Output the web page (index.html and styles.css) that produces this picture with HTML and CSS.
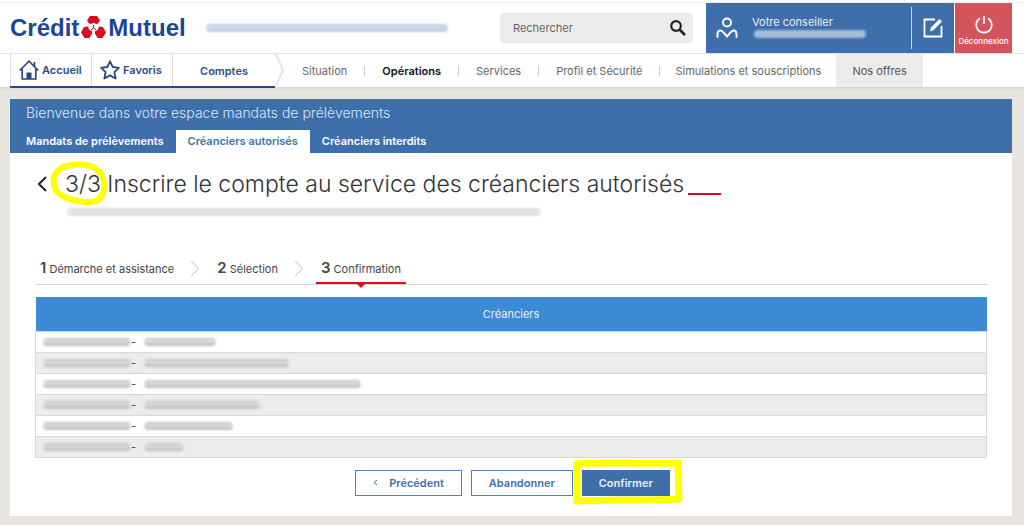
FILE: index.html
```html
<!DOCTYPE html>
<html lang="fr">
<head>
<meta charset="utf-8">
<title>Crédit Mutuel - Créanciers autorisés</title>
<link rel="stylesheet" href="styles.css">
</head>
<body>
<header class="top">
  <a class="logo" href="#">
    <span>Crédit</span>
    <svg class="logo-mark" width="25" height="22" viewBox="0 0 25 22" aria-hidden="true">
      <path fill="#d6101c" d="M9 0h7l3 4.500-2 3-2 .5a4 4 0 0 0-5 0l-2-.5-2-3z"/>
      <path fill="#d6101c" d="M3 11l4-.5 1 3 3 2v2L8.500 22H3.500L0 16.500z"/>
      <path fill="#d6101c" d="M22 11l-4-.5-1 3-3 2v2l2.500 4.500h5l3.500-5.500z"/>
      <path stroke="#d6101c" stroke-width="1" fill="none" d="M12.500 9v3M10 14l2.500-2 2.500 2"/>
    </svg>
    <span>Mutuel</span>
  </a>
  <span class="smear smear-name"></span>
  <form class="search">
    <input type="text" placeholder="Rechercher" aria-label="Rechercher">
    <button type="button" aria-label="Lancer la recherche">
      <svg width="18" height="18" viewBox="0 0 18 18" fill="none" stroke="#222"><circle cx="7" cy="7" r="4.800" stroke-width="2.200"/><path d="M10.500 10.500l5.500 5.500" stroke-width="2.600"/></svg>
    </button>
  </form>
  <div class="adviser">
    <svg class="person" width="22" height="22" viewBox="0 0 22 22" fill="none" stroke="#fff" stroke-width="1.900" stroke-linecap="round"><circle cx="11" cy="5.500" r="4"/><path d="M1.500 20v-3c0-3.500 3.500-4.500 5.500-2l4 4.500 4-4.500c2-2.500 5.500-1.500 5.500 2v3"/></svg>
    <div class="adviser-text">
      <span>Votre conseiller</span>
      <span class="smear smear-adviser"></span>
    </div>
    <a class="write" href="#" aria-label="Écrire">
      <svg width="21" height="21" viewBox="0 0 21 21" fill="none" stroke="#fff" stroke-width="1.800"><path d="M12 2.500H1.500v17h17V9"/><path d="M7 14.500l1-4L16.500 2l2.500 2.500L10.500 13z" fill="#fff" stroke="none"/></svg>
    </a>
  </div>
  <a class="logout" href="#">
    <svg width="20" height="19" viewBox="0 0 20 19" fill="none" stroke="#fff" stroke-width="1.700"><path d="M6 3.200a7.800 7.800 0 1 0 8 0M10 1v8"/></svg>
    <span>Déconnexion</span>
  </a>
</header>

<nav class="nav">
  <div class="nav-main">
    <a class="nav-home" href="#">
      <svg width="20" height="20" viewBox="0 0 20 20" fill="none" stroke="#28497f" stroke-width="1.700"><path d="M.7 10.500L10 1.200l9.300 9.300M3.200 9v10h13.600V9M15.500 6V2"/><path d="M7.500 12.500h5V19h-5z" fill="#28497f" stroke="none"/></svg>
      Accueil
    </a>
    <a class="nav-home" href="#">
      <svg width="20" height="20" viewBox="0 0 20 20" fill="none" stroke="#28497f" stroke-width="1.800" stroke-linejoin="round"><path d="M10 1.300l2.700 5.700 6.200.8-4.500 4.300 1.200 6.400L10 15.400l-5.600 3.100 1.200-6.400L1.100 7.800 7.300 7z"/></svg>
      Favoris
    </a>
    <a class="nav-accounts" href="#">Comptes</a>
  </div>
  <svg class="nav-arrow" width="10" height="33" viewBox="0 0 10 33" fill="none" aria-hidden="true"><path d="M1 0l7 16-7 16" stroke="#e6e6e6" stroke-width="2"/></svg>
  <ul class="nav-links">
    <li><a href="#">Situation</a></li>
    <li><a class="current" href="#">Opérations</a></li>
    <li><a href="#">Services</a></li>
    <li><a href="#">Profil et Sécurité</a></li>
    <li><a href="#">Simulations et souscriptions</a></li>
  </ul>
  <a class="offers" href="#">Nos offres</a>
</nav>

<main class="page">
  <div class="banner">
    <p>Bienvenue dans votre espace mandats de prélèvements</p>
    <nav class="tabs">
      <a href="#">Mandats de prélèvements</a>
      <a class="active" href="#">Créanciers autorisés</a>
      <a href="#">Créanciers interdits</a>
    </nav>
  </div>
  <div class="content">
    <div class="heading">
      <a class="back" href="#" aria-label="Retour"><svg width="10" height="16" viewBox="0 0 10 16" fill="none" stroke="#222" stroke-width="2"><path d="M9 1L2 8l7 7"/></svg></a>
      <h1><span class="count">3/3<svg class="ring" width="60" height="46" viewBox="0 0 60 46" fill="none"><path d="M13 6C24 2 39 3 45 7c7 5 10 12 9 21-1 8-5 13-15 13-10 0-20-2-28-7C4 30 3 24 4 17c1-5 4-9 9-11z" stroke="#ff0" stroke-width="6"/></svg></span> Inscrire le compte au service des créanciers autorisés</h1>
      <span class="rule"></span>
    </div>
    <span class="smear smear-sub"></span>
    <ol class="steps">
      <li><b>1</b> Démarche et assistance</li>
      <li><b>2</b> Sélection</li>
      <li class="on"><b>3</b> Confirmation</li>
    </ol>
    <table class="creditors">
      <thead><tr><th>Créanciers</th></tr></thead>
      <tbody>
        <tr><td><div class="entry"><i class="smear code"></i>-<i class="smear" style="width:72px"></i></div></td></tr>
        <tr><td><div class="entry"><i class="smear code"></i>-<i class="smear" style="width:145px"></i></div></td></tr>
        <tr><td><div class="entry"><i class="smear code"></i>-<i class="smear" style="width:217px"></i></div></td></tr>
        <tr><td><div class="entry"><i class="smear code"></i>-<i class="smear" style="width:116px"></i></div></td></tr>
        <tr><td><div class="entry"><i class="smear code"></i>-<i class="smear" style="width:89px"></i></div></td></tr>
        <tr><td><div class="entry"><i class="smear code"></i>-<i class="smear" style="width:40px"></i></div></td></tr>
      </tbody>
    </table>
    <div class="actions">
      <button type="button"><svg width="5" height="7" viewBox="0 0 5 7" fill="none" stroke="#4270ac"><path d="M4 1L1 3.500 4 6"/></svg>Précédent</button>
      <button type="button">Abandonner</button>
      <div class="confirm">
        <button class="primary" type="button">Confirmer</button>
        <svg class="frame" width="112" height="48" viewBox="0 0 112 48" fill="none"><path d="M5 6C30 4 75 6 106 5l1 36c-30 2-70 0-102 2z" stroke="#ff0" stroke-width="7" stroke-linejoin="round"/></svg>
      </div>
    </div>
  </div>
</main>
</body>
</html>
```
FILE: styles.css
```css
* { box-sizing: border-box; }
body {
  margin: 0;
  background: #e8e4e0;
  color: #444;
  font: 11px/16px Inter, "Liberation Sans", sans-serif;
}
a { color: inherit; text-decoration: none; }
button { font: inherit; cursor: pointer; }
svg { display: block; flex: none; }

.smear {
  display: block;
  height: 8px;
  border-radius: 4px;
  background: linear-gradient(#bdbdbd, #dedede 35%, #cfcfcf 65%, #bababa);
  filter: blur(1px);
}

.top {
  display: flex;
  align-items: center;
  height: 54px;
  padding: 3px 12px 1px 10px;
  background: linear-gradient(#fff 2px, #eee 2px, #eee 3px, #fff 3px);
  border-bottom: 1px solid #e6e6e6;
}
.logo {
  display: flex;
  align-items: center;
  gap: 2px;
  color: #1b459a;
  font: bold 24px/28px "Liberation Sans", Arial, sans-serif;
}
.logo-mark { margin-bottom: 2px; }
.smear-name {
  width: 242px;
  margin-left: 20px;
  background: linear-gradient(#b4c7e2, #d5dfef 40%, #c3d1e8 65%, #b7c9e4);
}
.search {
  display: flex;
  align-items: center;
  width: 193px;
  height: 30px;
  margin-left: auto;
  padding: 0 6px 0 13px;
  border-radius: 4px;
  background: #ececec;
}
.search input {
  flex: 1;
  min-width: 0;
  padding: 0;
  border: 0;
  outline: 0;
  background: none;
  color: #666;
  font: inherit;
}
.search input::placeholder { color: #666; opacity: 1; }
.search button { padding: 0; border: 0; background: none; }
.adviser {
  display: flex;
  align-items: center;
  width: 248px;
  height: 50px;
  margin-left: 13px;
  padding-left: 10px;
  background: #3f6fab;
  color: #e8eef7;
}
.adviser-text { flex: 1; padding-left: 14px; }
.smear-adviser {
  width: 112px;
  margin: 0 0 4px 2px;
  background: #a3bbdc;
}
.write {
  display: flex;
  align-items: center;
  justify-content: center;
  width: 43px;
  height: 42px;
  border-left: 1px solid #c8d6e9;
}
.logout {
  display: flex;
  flex-direction: column;
  align-items: center;
  justify-content: flex-end;
  width: 57px;
  height: 50px;
  margin-left: 1px;
  padding-bottom: 5px;
  background: #d4545c;
  color: #fff;
  font-size: 8px;
  font-weight: 500;
}
.logout span { line-height: 14px; }

.nav {
  display: flex;
  height: 33px;
  padding-left: 10px;
  background: #fff;
  box-shadow: 0 1px 3px #cfccc7;
}
.nav-main {
  display: flex;
  height: 34px;
  border-bottom: 2px solid #28498a;
  color: #2c4d85;
  font-weight: 600;
}
.nav-home {
  display: flex;
  align-items: center;
  gap: 3px;
  width: 81px;
  padding-left: 8px;
  border-left: 1px solid #ddd;
}
.nav-accounts {
  width: 103px;
  padding-top: 9px;
  border-left: 1px solid #ddd;
  text-align: center;
}
.nav-links {
  display: flex;
  align-items: center;
  margin: 0;
  padding: 0;
  list-style: none;
  color: #666;
}
.nav-links li { display: flex; padding: 0 17px; line-height: 10px; }
.nav-links li + li { border-left: 1px solid #ccc; }
.nav-links li:last-child { padding: 0 15px; }
.current { color: #111; font-weight: 600; }
.offers {
  padding: 9px 16px;
  background: #ececec;
  color: #555;
}

.page { margin: 12px 12px 10px 10px; background: #fff; }
.banner { padding: 5px 4px 0; background: #3f6fab; color: #fff; }
.banner p {
  margin: 0;
  padding: 0 12px;
  color: #dbe5f2;
  font-size: 14px;
  font-weight: 300;
  line-height: 18px;
}
.tabs { display: flex; margin-top: 8px; font-weight: 600; }
.tabs a { padding: 3px 12px 4px; }
.tabs .active { background: #fff; color: #4270ac; }

.content { padding: 16px 25px 20px; }
.heading { display: flex; align-items: center; gap: 18px; padding-left: 2px; }
.heading h1 {
  margin: 0;
  color: #333;
  font-size: 23px;
  font-weight: 300;
  line-height: 30px;
}
.count { position: relative; }
.ring { position: absolute; top: -9px; left: -15px; }
.rule {
  align-self: flex-end;
  width: 33px;
  margin: 0 0 4px -14px;
  border-bottom: 2px solid #d6101c;
}
.smear-sub {
  width: 474px;
  margin: 9px 0 0 32px;
  background: linear-gradient(#d8d8d8, #e8e8e8 40%, #dcdcdc);
}
.steps {
  display: flex;
  margin: 42px 0 0;
  padding: 0;
  border-bottom: 1px solid #d4d4d4;
  list-style: none;
}
.steps li {
  position: relative;
  height: 26px;
  margin-right: 33px;
  padding: 0 5px;
  line-height: 20px;
}
.steps b { font-size: 15px; font-weight: 600; }
.steps li:not(.on)::after {
  content: "";
  position: absolute;
  top: 5px;
  right: -18px;
  width: 10px;
  height: 10px;
  border: solid #ccc;
  border-width: 1px 1px 0 0;
  transform: rotate(45deg);
}
.steps .on { margin-bottom: -1px; border-bottom: 2px solid #d6101c; }
.steps .on::after {
  content: "";
  position: absolute;
  top: 26px;
  left: 50%;
  margin-left: -4px;
  border: 4px solid transparent;
  border-top-color: #d6101c;
  border-bottom: 0;
}

.creditors {
  width: 100%;
  margin-top: 12px;
  border-collapse: collapse;
}
.creditors th {
  height: 34px;
  padding: 0;
  background: #3d8ad5;
  color: #e6f0fa;
  font-weight: 400;
}
.creditors td { height: 21px; padding: 0 7px; border: 1px solid #d8d8d8; }
.creditors tr:nth-child(even) td { background: #ececec; }
.entry { display: flex; align-items: center; height: 20px; }
.entry .smear { margin-left: 8px; }
.entry .code { width: 88px; margin: 0; }

.actions {
  display: flex;
  justify-content: center;
  gap: 9px;
  margin-top: 12px;
  padding-left: 3px;
}
.actions button {
  display: flex;
  align-items: center;
  gap: 11px;
  height: 26px;
  padding: 0 17px;
  border: 1px solid #4f7eb8;
  background: #fff;
  color: #4270ac;
  font-weight: 600;
}
.actions .primary { padding: 0 16px; background: #3f6fab; border-color: #3f6fab; color: #e8eef7; }
.confirm { position: relative; }
.frame { position: absolute; top: -12px; left: -10px; pointer-events: none; }
```
